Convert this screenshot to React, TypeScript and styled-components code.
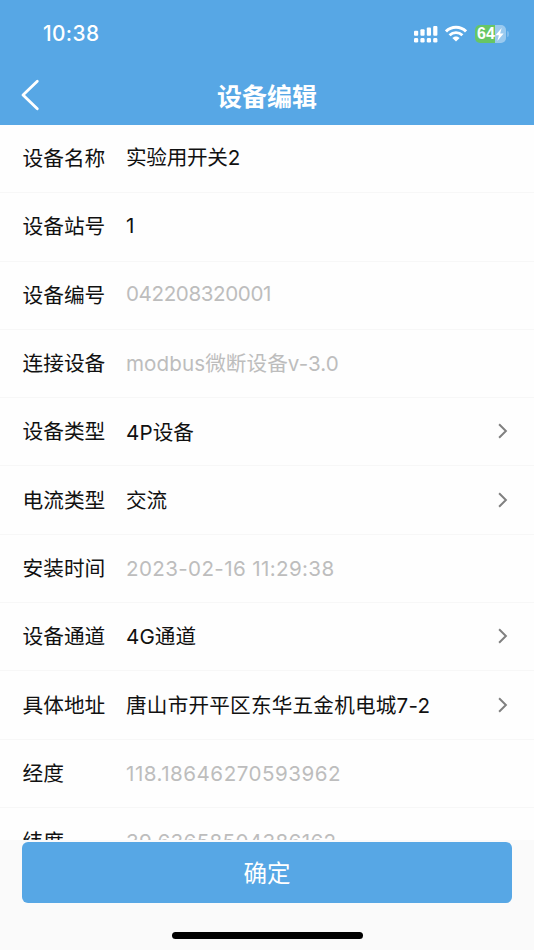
import React from 'react';
import styled, { createGlobalStyle } from 'styled-components';

const GlobalStyle = createGlobalStyle`
  * { box-sizing: border-box; }
  html, body { margin: 0; padding: 0; background: #fff; }
  body { font-family: Inter, "Noto Sans CJK SC", sans-serif; color: #111; }
`;

const Screen = styled.div`
  display: flex;
  flex-direction: column;
  width: 534px;
  height: 950px;
  overflow: hidden;
  background: #fefefe;
`;

const Header = styled.header`
  flex: none;
  height: 125px;
  background: #57a7e5;
  color: #fff;
`;

const StatusBar = styled.div`
  display: flex;
  align-items: center;
  justify-content: space-between;
  height: 66px;
  padding: 2px 25px 0 43px;
`;

const Clock = styled.time`
  font-size: 20.8px;
  font-weight: 500;
  line-height: 24px;
  letter-spacing: 0.4px;
`;

const StatusIcons = styled.div`
  display: flex;
  align-items: center;
  svg { display: block; }
`;

const TitleBar = styled.div`
  display: grid;
  grid-template-columns: 60px 1fr 60px;
  align-items: center;
  height: 59px;
`;

const BackButton = styled.button`
  display: flex;
  align-items: center;
  height: 40px;
  padding: 0 0 2px 20px;
  border: 0;
  background: none;
`;

const Title = styled.h1`
  margin: 0;
  padding-top: 2px;
  font-size: 25px;
  font-weight: 700;
  line-height: 36px;
  text-align: center;
`;

const Form = styled.main`
  flex: 1;
  min-height: 0;
  overflow: hidden;
`;

const Row = styled.div`
  display: flex;
  align-items: center;
  height: 68.3px;
  padding: 0 25px 1px 22.5px;
  border-bottom: 1px solid #f7f7f7;
`;

const Label = styled.span`
  flex: none;
  width: 103.5px;
  padding-top: 2px;
  font-size: 20.7px;
  font-weight: 370;
  line-height: 30px;
`;

const Value = styled.span<{ $muted?: boolean; $shift: number; $tracking: number }>`
  flex: 1;
  padding-top: ${p => Math.max(0, p.$shift) * 2}px;
  padding-bottom: ${p => Math.max(0, -p.$shift) * 2}px;
  font-size: 20.6px;
  font-weight: ${p => (p.$muted ? 400 : 370)};
  line-height: 30px;
  letter-spacing: ${p => p.$tracking}px;
  white-space: nowrap;
  color: ${p => (p.$muted ? '#bdbdbd' : '#111')};
`;

const Footer = styled.footer`
  display: flex;
  flex: none;
  flex-direction: column;
  align-items: center;
  height: 110px;
  padding: 2px 22px 0;
  background: #fafafa;
`;

const ConfirmButton = styled.button`
  width: 100%;
  height: 61px;
  padding: 2px 0 0;
  border: 0;
  border-radius: 6px;
  background: #57a7e5;
  color: #fff;
  font-family: inherit;
  font-size: 23.5px;
  font-weight: 370;
  line-height: 34px;
`;

const HomeIndicator = styled.div`
  width: 191px;
  height: 7px;
  margin-top: 29px;
  border-radius: 4px;
  background: #000;
`;

interface Field {
  label: string;
  value: string;
  muted?: boolean;
  link?: boolean;
  shift?: number;
  tracking?: number;
}

const fields: Field[] = [
  { label: '设备名称', value: '实验用开关2', tracking: -0.25 },
  { label: '设备站号', value: '1' },
  { label: '设备编号', value: '042208320001', muted: true, shift: -0.5, tracking: -0.4 },
  { label: '连接设备', value: 'modbus微断设备v-3.0', muted: true, shift: 0.5, tracking: 0.08 },
  { label: '设备类型', value: '4P设备', link: true, shift: 1.5, tracking: 0.1 },
  { label: '电流类型', value: '交流', link: true, shift: 1 },
  { label: '安装时间', value: '2023-02-16 11:29:38', muted: true, shift: 1, tracking: 0.36 },
  { label: '设备通道', value: '4G通道', link: true, shift: 1, tracking: 0.1 },
  { label: '具体地址', value: '唐山市开平区东华五金机电城7-2', link: true, shift: 1, tracking: 0.22 },
  { label: '经度', value: '118.18646270593962', muted: true, shift: 1, tracking: 0.5 },
  { label: '纬度', value: '39.63658504386162', muted: true, shift: 1, tracking: 0.34 },
];

const SignalIcon = () => (
  <svg width="24" height="18" viewBox="0 0 24 18" fill="#fff">
    <rect x="0" y="5.8" width="4.2" height="5" rx="1" />
    <rect x="6.4" y="4.3" width="4.2" height="6.5" rx="1" />
    <rect x="12.8" y="2.6" width="4.2" height="8.2" rx="1" />
    <rect x="19.2" y="1" width="4.2" height="9.8" rx="1" />
    <rect x="0" y="13.1" width="4.2" height="4.4" rx="1.3" />
    <rect x="6.4" y="13.1" width="4.2" height="4.4" rx="1.3" />
    <rect x="12.8" y="13.1" width="4.2" height="4.4" rx="1.3" />
    <rect x="19.2" y="13.1" width="4.2" height="4.4" rx="1.3" />
  </svg>
);

const WifiIcon = styled(({ className }: { className?: string }) => (
  <svg className={className} width="22" height="18" viewBox="0 0 22 18" fill="none" stroke="#fff" strokeWidth="2.9">
    <path d="M1 6.4Q5.1 2.3 11 2.3T21 6.4" />
    <path d="M4.6 10.2Q7.3 7.6 11 7.6T17.4 10.2" />
    <path d="M11 11.4C9.5 11.4 8.2 12 7.3 12.9L11 16.6L14.7 12.9C13.8 12 12.5 11.4 11 11.4Z" fill="#fff" stroke="none" />
  </svg>
))`
  margin-left: 7px;
`;

const Battery = styled.div`
  display: flex;
  align-items: center;
  margin-left: 8px;
`;

const BatteryBody = styled.div`
  display: flex;
  align-items: center;
  width: 31px;
  height: 18px;
  padding-left: 2px;
  border-radius: 5px;
  background: linear-gradient(90deg, #67c665 64%, #9acaef 64%);
  font-family: "Liberation Sans", sans-serif;
  font-size: 16px;
  font-weight: 700;
  line-height: 18px;
`;

const BatteryCap = styled.div`
  width: 2px;
  height: 6px;
  margin-left: 1px;
  border-radius: 0 2px 2px 0;
  background: #7dbbec;
`;

const BoltIcon = () => (
  <svg width="9" height="13" viewBox="0 0 8 12" fill="#fff">
    <path d="M6 0L0.3 6.7H3.5L2 12L7.8 5H4.6Z" />
  </svg>
);

const BackIcon = () => (
  <svg width="20" height="32" viewBox="0 0 20 32" fill="none" stroke="#fff" strokeWidth="2.8" strokeLinecap="round" strokeLinejoin="round">
    <path d="M17.3 2.3L3 16L17.3 29.7" />
  </svg>
);

const Chevron = () => (
  <svg width="12" height="18" viewBox="0 0 12 18" fill="none" stroke="#808080" strokeWidth="2">
    <path d="M2.1 2.2L8.9 9L2.1 15.8" />
  </svg>
);

export default function App() {
  return (
    <>
      <GlobalStyle />
      <Screen>
        <Header>
          <StatusBar>
            <Clock>10:38</Clock>
            <StatusIcons>
              <SignalIcon />
              <WifiIcon />
              <Battery>
                <BatteryBody>64<BoltIcon /></BatteryBody>
                <BatteryCap />
              </Battery>
            </StatusIcons>
          </StatusBar>
          <TitleBar>
            <BackButton aria-label="返回"><BackIcon /></BackButton>
            <Title>设备编辑</Title>
          </TitleBar>
        </Header>
        <Form>
          {fields.map(f => (
            <Row key={f.label}>
              <Label>{f.label}</Label>
              <Value $muted={f.muted} $shift={f.shift ?? 0} $tracking={f.tracking ?? 0}>{f.value}</Value>
              {f.link && <Chevron />}
            </Row>
          ))}
        </Form>
        <Footer>
          <ConfirmButton>确定</ConfirmButton>
          <HomeIndicator />
        </Footer>
      </Screen>
    </>
  );
}
